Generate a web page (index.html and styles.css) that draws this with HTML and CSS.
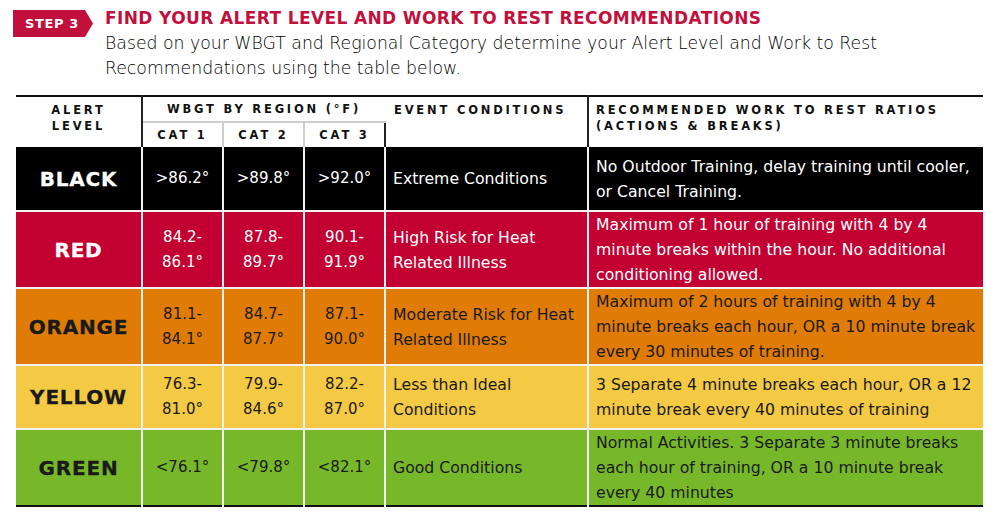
FILE: index.html
```html
<!DOCTYPE html>
<html lang="en">
<head>
<meta charset="utf-8">
<title>Step 3 - Alert Level</title>
<link rel="stylesheet" href="styles.css">
</head>
<body>
<div class="page">
  <header class="step">
    <div class="badge">STEP 3</div>
    <div class="intro">
      <h1 class="title">FIND YOUR ALERT LEVEL AND WORK TO REST RECOMMENDATIONS</h1>
      <p class="lead">Based on your WBGT and Regional Category determine your Alert Level and Work to Rest<br>Recommendations using the table below.</p>
    </div>
  </header>

  <table class="alerts">
    <colgroup>
      <col class="c-level">
      <col class="c-cat">
      <col class="c-cat">
      <col class="c-cat">
      <col class="c-event">
      <col class="c-rec">
    </colgroup>
    <thead>
      <tr class="h1">
        <th rowspan="2" class="th-level">ALERT<br>LEVEL</th>
        <th colspan="3" class="th-wbgt">WBGT BY REGION (°F)</th>
        <th rowspan="2" class="th-left th-event">EVENT CONDITIONS</th>
        <th rowspan="2" class="th-left th-rec">RECOMMENDED WORK TO REST RATIOS<br>(ACTIONS &amp; BREAKS)</th>
      </tr>
      <tr class="h2">
        <th class="th-cat">CAT 1</th>
        <th class="th-cat">CAT 2</th>
        <th class="th-cat th-cat-last">CAT 3</th>
      </tr>
    </thead>
    <tbody>
      <tr class="row black short">
        <td class="level">BLACK</td>
        <td class="num">&gt;86.2°</td>
        <td class="num">&gt;89.8°</td>
        <td class="num">&gt;92.0°</td>
        <td class="txt">Extreme Conditions</td>
        <td class="txt">No Outdoor Training, delay training until cooler,<br>or Cancel Training.</td>
      </tr>
      <tr class="row red tall">
        <td class="level">RED</td>
        <td class="num">84.2-<br>86.1°</td>
        <td class="num">87.8-<br>89.7°</td>
        <td class="num">90.1-<br>91.9°</td>
        <td class="txt">High Risk for Heat<br>Related Illness</td>
        <td class="txt">Maximum of 1 hour of training with 4 by 4<br>minute breaks within the hour. No additional<br>conditioning allowed.</td>
      </tr>
      <tr class="row orange tall">
        <td class="level">ORANGE</td>
        <td class="num">81.1-<br>84.1°</td>
        <td class="num">84.7-<br>87.7°</td>
        <td class="num">87.1-<br>90.0°</td>
        <td class="txt">Moderate Risk for Heat<br>Related Illness</td>
        <td class="txt">Maximum of 2 hours of training with 4 by 4<br>minute breaks each hour, OR a 10 minute break<br>every 30 minutes of training.</td>
      </tr>
      <tr class="row yellow short">
        <td class="level">YELLOW</td>
        <td class="num">76.3-<br>81.0°</td>
        <td class="num">79.9-<br>84.6°</td>
        <td class="num">82.2-<br>87.0°</td>
        <td class="txt">Less than Ideal<br>Conditions</td>
        <td class="txt">3 Separate 4 minute breaks each hour, OR a 12<br>minute break every 40 minutes of training</td>
      </tr>
      <tr class="row green tall">
        <td class="level">GREEN</td>
        <td class="num">&lt;76.1°</td>
        <td class="num">&lt;79.8°</td>
        <td class="num">&lt;82.1°</td>
        <td class="txt">Good Conditions</td>
        <td class="txt">Normal Activities. 3 Separate 3 minute breaks<br>each hour of training, OR a 10 minute break<br>every 40 minutes</td>
      </tr>
    </tbody>
  </table>
</div>
</body>
</html>
```

FILE: styles.css
```css
html, body {
  margin: 0;
  padding: 0;
  background: #ffffff;
}

.page {
  width: 1000px;
  height: 522px;
  padding: 8px 0 0 16px;
  box-sizing: border-box;
  font-family: "DejaVu Sans", "Liberation Sans", sans-serif;
  color: #1c1c1c;
}

/* ---------- step header ---------- */
.step {
  display: flex;
  align-items: flex-start;
  gap: 12px;
  margin-left: -3px;
}

.badge {
  flex: none;
  width: 80px;
  height: 27px;
  margin-top: 2px;
  background: #c2103c;
  color: #ffffff;
  font-family: "DejaVu Sans", sans-serif;
  font-weight: 700;
  font-size: 13px;
  letter-spacing: 0.6px;
  line-height: 27px;
  padding-left: 12px;
  box-sizing: border-box;
  white-space: nowrap;
  clip-path: polygon(0 0, 90% 0, 100% 50%, 90% 100%, 0 100%);
}

.intro {
  flex: 1;
}

.title {
  margin: 0;
  font-family: "DejaVu Sans", sans-serif;
  font-weight: 700;
  font-size: 17px;
  line-height: 20px;
  color: #c2103c;
  letter-spacing: 0.38px;
  white-space: nowrap;
}

.lead {
  margin: 3px 0 0;
  font-family: "DejaVu Sans", sans-serif;
  font-weight: 200;
  font-size: 17.3px;
  line-height: 25px;
  color: #000000;
  white-space: nowrap;
}

/* ---------- table ---------- */
.alerts {
  margin-top: 14px;
  width: 967px;
  table-layout: fixed;
  border-collapse: collapse;
  border-top: 2px solid #111;
  border-bottom: 2px solid #111;
}

.c-level { width: 126px; }
.c-cat { width: 81px; }
.c-event { width: 203px; }
.c-rec { width: 395px; }

thead th {
  font-family: "DejaVu Sans", sans-serif;
  font-weight: 700;
  font-size: 11.5px;
  letter-spacing: 2.8px;
  color: #111;
  padding: 0;
  vertical-align: top;
  white-space: nowrap;
}

.h1 { height: 24px; }
.h2 { height: 25px; }

.th-level {
  text-align: center;
  line-height: 16px;
  padding-top: 5px;
  border-right: 2px solid #222;
}

.th-wbgt {
  text-align: center;
  line-height: 24px;
  border-bottom: 2px solid #cfcfcf;
}

.th-cat {
  text-align: center;
  line-height: 24px;
  vertical-align: middle;
  border-right: 2px solid #cfcfcf;
}

.th-cat-last {
  border-right: 2px solid #222;
}

.th-left {
  text-align: left;
  line-height: 16px;
  padding: 5px 0 0 8px;
}

.th-event {
  border-right: 2px solid #222;
}

.th-rec {
  padding-left: 7px;
}

tbody td {
  padding: 0;
  border-right: 2px solid #f2f2f2;
  border-bottom: 2px solid #f2f2f2;
  vertical-align: middle;
}

tbody td:last-child {
  border-right: none;
}

tbody tr:last-child td {
  border-bottom: none;
}

.short { height: 64px; }
.tall { height: 77px; }

.level {
  text-align: center;
  font-family: "DejaVu Sans", sans-serif;
  font-weight: 700;
  font-size: 20px;
  letter-spacing: 0.8px;
  -webkit-text-stroke: 0.3px currentColor;
}

.num {
  text-align: center;
  font-family: "DejaVu Sans", sans-serif;
  font-size: 15px;
  line-height: 25px;
}

.txt {
  padding: 0 4px 0 7px;
  font-family: "DejaVu Sans", sans-serif;
  font-size: 15.7px;
  line-height: 25px;
  white-space: nowrap;
}

.black td { background: #000000; color: #ffffff; }
.red td { background: #c20031; color: #ffffff; }
.orange td { background: #e07c05; color: #1a1a1a; }
.yellow td { background: #f4c944; color: #1a1a1a; }
.green td { background: #77b82a; color: #1a1a1a; }
```
